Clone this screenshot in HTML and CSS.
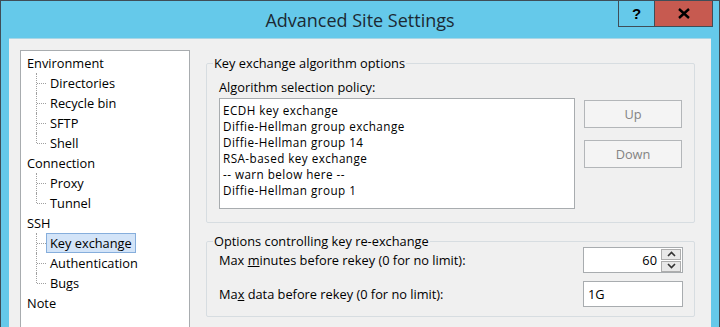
FILE: index.html
```html
<!DOCTYPE html>
<html>
<head>
<meta charset="utf-8">
<link rel="stylesheet" href="styles.css">
</head>
<body>
<div class="window">
  <div class="titlebar">
    <div class="title">Advanced Site Settings</div>
    <div class="caption">
      <div class="cap help">?</div>
      <div class="cap close"><svg width="14" height="11" viewBox="0 0 14 11"><path d="M2 1 L12 10 M12 1 L2 10" stroke="#000" stroke-width="2.4" fill="none"/></svg></div>
    </div>
  </div>
  <div class="client">
    <div class="tree">
      <div class="node"><span class="lbl">Environment</span></div>
      <div class="child"><span class="lbl">Directories</span></div>
      <div class="child"><span class="lbl">Recycle bin</span></div>
      <div class="child"><span class="lbl">SFTP</span></div>
      <div class="child last"><span class="lbl">Shell</span></div>
      <div class="node"><span class="lbl">Connection</span></div>
      <div class="child"><span class="lbl">Proxy</span></div>
      <div class="child last"><span class="lbl">Tunnel</span></div>
      <div class="node"><span class="lbl">SSH</span></div>
      <div class="child"><span class="lbl sel">Key exchange</span></div>
      <div class="child"><span class="lbl">Authentication</span></div>
      <div class="child last"><span class="lbl">Bugs</span></div>
      <div class="node"><span class="lbl">Note</span></div>
    </div>
    <div class="panel">
      <fieldset class="group g1">
        <legend>Key exchange algorithm options</legend>
        <div class="label">Algorithm selection policy:</div>
        <div class="listrow">
          <div class="listbox">
            <div class="item">ECDH key exchange</div>
            <div class="item">Diffie-Hellman group exchange</div>
            <div class="item">Diffie-Hellman group 14</div>
            <div class="item">RSA-based key exchange</div>
            <div class="item">-- warn below here --</div>
            <div class="item">Diffie-Hellman group 1</div>
          </div>
          <div class="buttons">
            <div class="btn">Up</div>
            <div class="btn">Down</div>
          </div>
        </div>
      </fieldset>
      <fieldset class="group g2">
        <legend>Options controlling key re-exchange</legend>
        <div class="row first">
          <span>Max <u>m</u>inutes before rekey (0 for no limit):</span>
          <div class="input spin">
            <span class="val">60</span>
            <div class="spinbtns">
              <div class="sb"><svg width="9" height="6" viewBox="0 0 9 6"><path d="M1 5 L4.5 1.5 L8 5" stroke="#333" stroke-width="1.6" fill="none"/></svg></div>
              <div class="sb"><svg width="9" height="6" viewBox="0 0 9 6"><path d="M1 1 L4.5 4.5 L8 1" stroke="#333" stroke-width="1.6" fill="none"/></svg></div>
            </div>
          </div>
        </div>
        <div class="row">
          <span>Ma<u>x</u> data before rekey (0 for no limit):</span>
          <div class="input"><span class="val left">1G</span></div>
        </div>
      </fieldset>
    </div>
  </div>
</div>
</body>
</html>
```
FILE: styles.css
```css
* { box-sizing: border-box; }
html, body { margin: 0; padding: 0; }
body {
  width: 720px;
  height: 327px;
  overflow: hidden;
  font-family: "Open Sans", "Noto Sans", sans-serif;
  font-size: 12.8px;
  color: #000;
}
.window {
  width: 720px;
  height: 327px;
  background: #65c9ea;
  border-top: 1px solid #3f4d57;
  border-left: 1px solid #3f4d57;
  border-right: 1px solid #3f4d57;
  display: flex;
  flex-direction: column;
  overflow: hidden;
}
.titlebar {
  height: 37px;
  flex: none;
  display: grid;
  grid-template-columns: 1fr auto 1fr;
}
.title {
  grid-column: 2;
  font-size: 18px;
  line-height: 38px;
  color: #1c2933;
  white-space: nowrap;
}
.caption {
  grid-column: 3;
  justify-self: end;
  align-self: start;
  display: flex;
  margin-top: -1px;
  margin-right: 6px;
}
.cap {
  height: 27px;
  border: 1px solid #3f4d57;
  display: flex;
  align-items: center;
  justify-content: center;
}
.help {
  width: 37px;
  font-family: "Liberation Sans", sans-serif;
  font-weight: bold;
  font-size: 15px;
  color: #000;
}
.close {
  width: 58px;
  border-left: none;
  background: #c75a50;
}
.client {
  flex: 1;
  margin: 0 8px;
  background: #f0f0f0;
  border-top: 1px solid #a9d6e6;
  display: flex;
  gap: 16px;
  padding: 11px 0 0 11px;
  overflow: hidden;
}
.tree {
  width: 170px;
  height: 300px;
  flex: none;
  background: #fff;
  border: 1px solid #a8acaf;
  padding: 2px 0 0 6px;
}
.node, .child {
  height: 20px;
  display: flex;
  align-items: center;
  position: relative;
}
.child { padding-left: 19px; }
.child::before {
  content: "";
  position: absolute;
  left: 9px;
  top: 0;
  height: 20px;
  border-left: 1px dotted #a0a0a0;
}
.child.last::before { height: 10px; }
.child::after {
  content: "";
  position: absolute;
  left: 10px;
  top: 10px;
  width: 9px;
  border-top: 1px dotted #a0a0a0;
}
.lbl {
  display: block;
  height: 20px;
  line-height: 18px;
  padding: 0 3px;
  border: 1px solid transparent;
  white-space: nowrap;
}
.node .lbl { padding: 0; border: none; line-height: 20px; }
.lbl.sel {
  background: #d3e4f8;
  border-color: #86aedc;
}
.panel {
  width: 489px;
  display: flex;
  flex-direction: column;
  gap: 10px;
  margin-top: 5px;
}
.group {
  margin: 0;
  border: 1px solid #d7dde1;
  border-radius: 2px;
  padding: 0 12px 0 12px;
  min-width: 0;
}
legend {
  margin-left: -6px;
  padding: 0 1px;
  line-height: 16px;
  height: 16px;
}
.g1 { padding-bottom: 13px; }
.label { line-height: 16px; margin-top: 8px; }
.listrow {
  display: flex;
  gap: 9px;
  margin-top: 3px;
}
.listbox {
  width: 356px;
  height: 111px;
  background: #fff;
  border: 1px solid #a8acaf;
  padding: 3px 3px;
  font-size: 11.7px;
  letter-spacing: 0.45px;
}
.item { line-height: 16px; height: 16px; white-space: nowrap; }
.buttons {
  display: flex;
  flex-direction: column;
  gap: 12px;
  margin-top: 2px;
}
.btn {
  width: 98px;
  height: 28px;
  border: 1px solid #b3b6b9;
  background: #f4f4f4;
  color: #838383;
  display: flex;
  align-items: center;
  justify-content: center;
}
.g2 { padding-right: 11px; padding-bottom: 9px; }
.row {
  height: 26px;
  display: flex;
  align-items: center;
  justify-content: space-between;
  margin-top: 8px;
}
.row.first { margin-top: -2px; }
.input {
  width: 100px;
  height: 26px;
  background: #fff;
  border: 1px solid #a8acaf;
  display: flex;
  align-items: center;
  justify-content: flex-end;
  padding: 0 1px 0 4px;
}
.val { flex: 1; text-align: right; padding-right: 4px; }
.val.left { text-align: left; padding: 0; }
.spinbtns {
  display: flex;
  flex-direction: column;
  gap: 1px;
  width: 20px;
}
.sb {
  height: 11px;
  border: 1px solid #adadad;
  background: #e8e8e8;
  display: flex;
  align-items: center;
  justify-content: center;
}
```
